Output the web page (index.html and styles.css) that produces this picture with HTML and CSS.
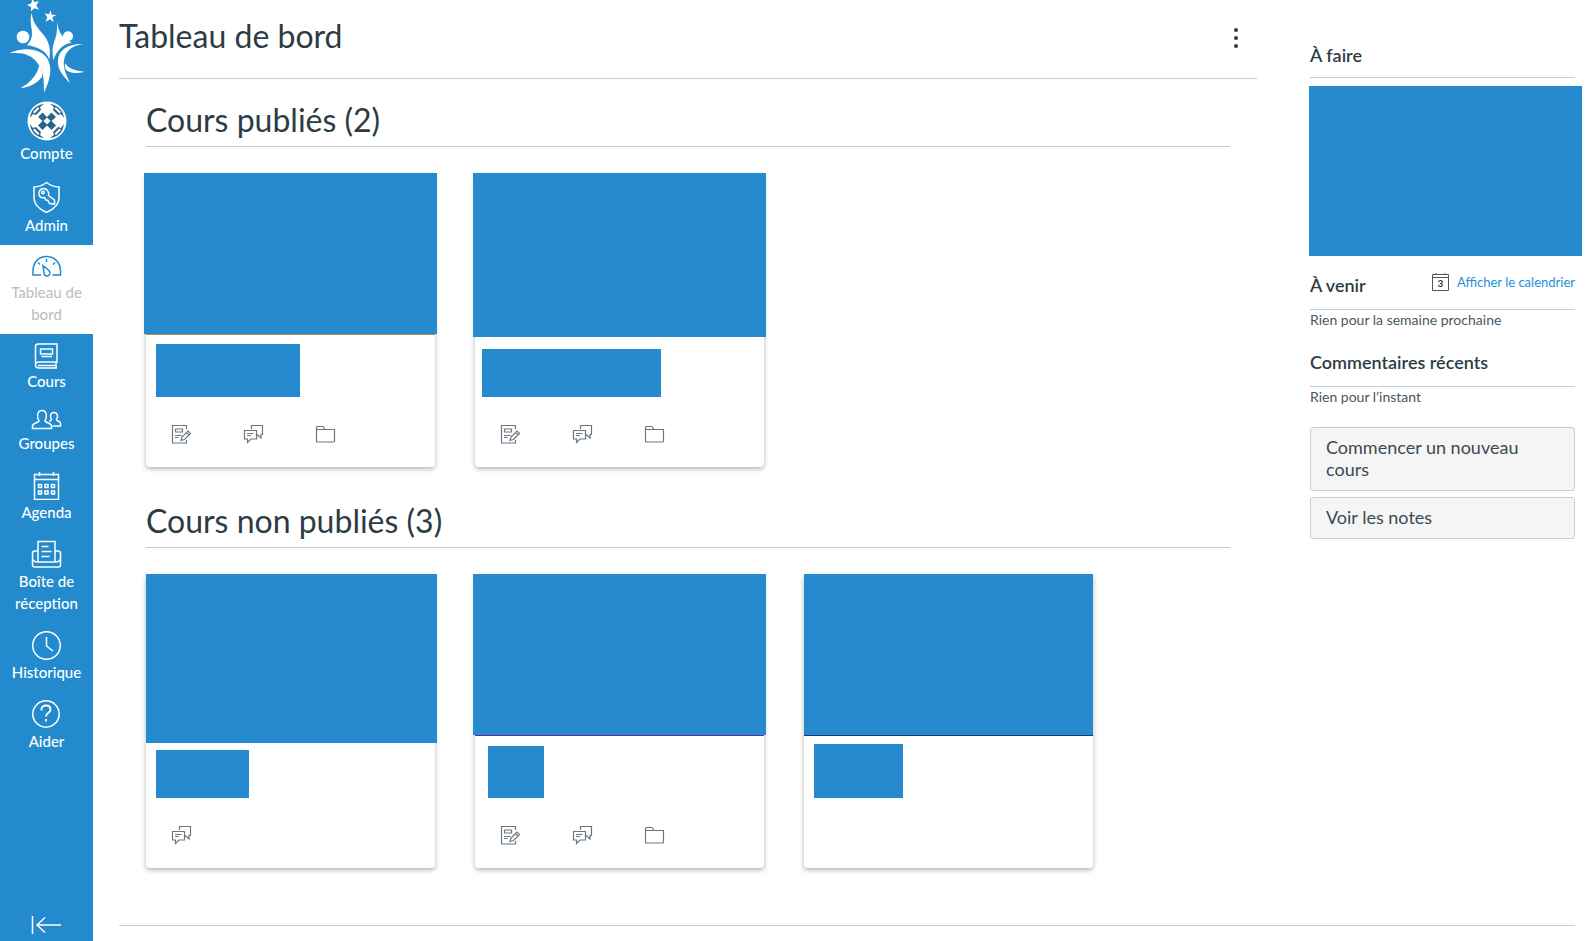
FILE: index.html
```
<!DOCTYPE html>
<html lang="fr">
	<head>
		<title>Tableau de bord</title>
		<meta charset="UTF-8">
		<link rel="stylesheet" href="styles.css">
	</head>
	<body>

		<!-- Shared card icons -->
		<svg class="symbols" width="0" height="0">
			<symbol id="icon-assignment" viewBox="0 0 21 20">
				<path d="M15.500 5V1.500H1.500v17.500h14v-3M4.500 5h7v3h-7zM4 11.500h6.500M4 13.500h3.500"/>
				<path d="M10 16.500l1-3.500 6-6 2.500 2.500-6 6zM15.500 8.500l2.500 2.500"/>
			</symbol>
			<symbol id="icon-discussion" viewBox="0 0 21 20">
				<path d="M8.500 5V1.500h11v9h-1.500V14l-4-3.500M1.500 6.500h12v8.500H8l-3.500 3.500V15h-3zM4 9.500h6.500M4 11.500h4"/>
			</symbol>
			<symbol id="icon-folder" viewBox="0 0 21 20">
				<path d="M1.500 5V3.500q0-1 1-1H8l2 3h9.500v11.500q0 1-1 1h-16q-1 0-1-1zM1.500 5.500H10"/>
			</symbol>
		</svg>

		<div class="layout">

			<nav class="global-nav">
				<a class="logo" href="#" aria-label="Accueil">
					<svg width="93" height="93" viewBox="0 0 279 279" fill="#fff">
						<path d="M97 -5l6 11 14-2-8 12 8 13-14-4-10 9v-13l-12-6 13-5z"/>
						<path d="M152 31l3 13 14 1-12 7 4 15-11-9-13 7 5-13-8-12 13 3z"/>
						<circle cx="69" cy="111" r="19"/>
						<circle cx="204" cy="109" r="15"/>
						<path d="M95 38c3 28 15 42 33 63 19 22 25 44 20 78-8-24-30-37-67-44 14-14 17-27 14-47-3-18-5-32 0-50z"/>
						<path d="M28 160c42-20 91-14 111 12 24 32 7 78-7 106 0-32 0-62-18-87-20-29-50-35-86-31z"/>
						<path d="M118 196c8 13 10 24 8 35-18 22-40 31-64 33 29-16 48-36 56-68z"/>
						<path d="M171 66c3 18 7 28 12 36 7 12 20 18 32 26-25 3-44 22-55 52-5-30-1-48 6-64 6-16 5-33 5-50z"/>
						<path d="M248 132c-40-1-65 15-72 37-10 33 12 59 34 80-12-27-23-49-17-73 5-23 22-38 55-44z"/>
						<path d="M195 190c13 18 30 22 58 25-18 6-38 5-52-3-6-6-8-12-6-22z"/>
					</svg>
				</a>
				<ul class="nav-list">
					<li><a class="nav-item" href="#">
						<svg width="40" height="40" viewBox="0 0 40 40">
							<circle cx="20" cy="20" r="19.500" fill="#fff"/>
							<path fill="#26678a" d="M15.500 11.500l4.500 4.500 4.500-4.500 4.500 4.500-4.500 4 4.500 4.500-4.500 4.500-4.500-4.500-4.500 4.500-4.500-4.500 4.500-4.500-4.500-4z"/>
							<path fill="#fff" d="M20 16.500l3.500 3.500-3.500 3.500-3.500-3.500z"/>
							<path fill="#26678a" d="M3 17C4 9 9 4 17 3l-4 3 1 3-5 5-3-1zM37 17C36 9 31 4 23 3l4 3-1 3 5 5 3-1zM3 23c1 8 6 13 14 14l-4-3 1-3-5-5-3 1zM37 23c-1 8-6 13-14 14l4-3-1-3 5-5 3 1z"/>
							<path fill="#fff" d="M6 11l5-5 1.500 1.500-5 5zM34 11l-5-5-1.500 1.500 5 5zM6 29l5 5 1.500-1.500-5-5zM34 29l-5 5-1.500-1.500 5-5z"/>
						</svg>
						Compte
					</a></li>
					<li><a class="nav-item" href="#">
						<svg width="31" height="32" viewBox="0 0 31 32">
							<path d="M15.500 1.500c4 3 8 4.500 12.500 4.500v11c0 7-6 11.500-12.500 14.500C9 28.500 3 24 3 17V6c4.500 0 8.500-1.500 12.500-4.500z"/>
							<path d="M17.500 14.500c1-4-2-7-5-7s-5.500 3-4.500 6.500c1 2.500 3.500 3 5.500 2.500l1.500 2.500 2 .5 1 2.500 2.500 1h3V19z"/>
							<circle cx="12" cy="11.500" r="1.300"/>
						</svg>
						Admin
					</a></li>
					<li><a class="nav-item active" href="#" aria-current="page">
						<svg width="31" height="27" viewBox="0 0 31 27">
							<path d="M10 22H2v-4C2 9 8 3.500 15.500 3.500S29.500 9 29.500 18v4h-8"/>
							<path d="M12 12.500l6 5c2 2.500.5 5.500-2 5.500-2 0-3-1.500-3-3.500zM15.500 6v3M7 9.500l2 2M24 9.500l-2 2"/>
						</svg>
						Tableau de bord
					</a></li>
					<li><a class="nav-item" href="#">
						<svg width="31" height="27" viewBox="0 0 31 27">
							<path d="M26 26H8c-2.500 0-3.500-1.500-3.500-3V4.500C4.500 3 5.500 2 7 2h19v18H8c-4.500 0-4.500 6 0 6M7 23.500h18M25 20v6"/>
							<path d="M9.500 7h12v5h-12zM10.500 14.500h10.500"/>
						</svg>
						Cours
					</a></li>
					<li><a class="nav-item" href="#">
						<svg width="31" height="22" viewBox="0 0 31 22">
							<path d="M1.500 19.500v-3c1-3 5-2 6.500-4.500C6 9 5.500 1.500 11 1.500S16 9 14 12c1.500 2.500 5.500 1.500 6.500 4.500v3z"/>
							<path d="M18 12.500c1 0 2-1 2.500-2-2-3-1-7 2.500-7s4.500 4 2.500 7c.5 2 4 1.500 4 4V17h-8"/>
						</svg>
						Groupes
					</a></li>
					<li><a class="nav-item" href="#">
						<svg width="31" height="29" viewBox="0 0 31 29">
							<path d="M3.500 3.500h24v25h-24zM3.500 8.500h24M8.500 1v4M22.500 1v4"/>
							<path d="M7.500 13.500h3v3h-3zM14 13.500h3v3h-3zM20.500 13.500h3v3h-3zM7.500 20h3v3h-3zM14 20h3v3h-3zM20.500 20h3v3h-3z"/>
						</svg>
						Agenda
					</a></li>
					<li><a class="nav-item" href="#">
						<svg width="31" height="29" viewBox="0 0 31 29">
							<path d="M7 11H4c-1.500 0-2.500 1-2.500 2.500V25c0 1 1 2 2 2h24c1 0 2-1 2-2V13.500C29.500 12 28.500 11 27 11h-3M1.500 18c0 2 2 4 4 4h20c2 0 4-2 4-4"/>
							<path d="M7 22V1.500h17V22M10.500 6.500h7M10.500 11.500h10M10.500 16.500h8"/>
						</svg>
						Boîte de réception
					</a></li>
					<li><a class="nav-item" href="#">
						<svg width="31" height="29" viewBox="0 0 31 29">
							<circle cx="15.500" cy="14.500" r="13.800"/>
							<path d="M15.500 6v9l6.500 5"/>
						</svg>
						Historique
					</a></li>
					<li><a class="nav-item" href="#">
						<svg width="31" height="29" viewBox="0 0 31 29">
							<circle cx="15" cy="14" r="13.200"/>
							<path d="M10.500 10.500V9c0-2 2-3.500 4.500-3.500s4.500 1.500 4.500 4c0 3.500-4.500 3-4.500 7M15 19v2.500" stroke-width="1.800"/>
						</svg>
						Aider
					</a></li>
				</ul>
				<button class="nav-toggle" aria-label="Réduire la navigation">
					<svg width="31" height="20" viewBox="0 0 31 20">
						<path d="M1.500 1v18M30 10H6M14 2.500L6 10l8 7.500"/>
					</svg>
				</button>
			</nav>

			<div class="wrapper">
				<div class="columns">

					<main class="dashboard">
						<header class="dashboard-header">
							<h1>Tableau de bord</h1>
							<button class="options" aria-label="Options du tableau de bord">
								<svg width="6" height="20" viewBox="0 0 6 20">
									<circle cx="3" cy="2" r="2"/><circle cx="3" cy="10" r="2"/><circle cx="3" cy="18" r="2"/>
								</svg>
							</button>
						</header>

						<section class="courses">
							<h2>Cours publiés (2)</h2>
							<div class="cards">
								<article class="card">
									<div class="hero math"><div class="cover"></div></div>
									<div class="card-body"><div class="name name-math"></div></div>
									<div class="actions">
										<a href="#" aria-label="Devoirs"><svg><use href="#icon-assignment"/></svg></a>
										<a href="#" aria-label="Discussions"><svg><use href="#icon-discussion"/></svg></a>
										<a href="#" aria-label="Fichiers"><svg><use href="#icon-folder"/></svg></a>
									</div>
								</article>
								<article class="card">
									<div class="hero"><div class="cover cover-tall"></div></div>
									<div class="card-body"><div class="name name-wide"></div></div>
									<div class="actions">
										<a href="#" aria-label="Devoirs"><svg><use href="#icon-assignment"/></svg></a>
										<a href="#" aria-label="Discussions"><svg><use href="#icon-discussion"/></svg></a>
										<a href="#" aria-label="Fichiers"><svg><use href="#icon-folder"/></svg></a>
									</div>
								</article>
							</div>
						</section>

						<section class="courses">
							<h2>Cours non publiés (3)</h2>
							<div class="cards">
								<article class="card">
									<div class="hero"><div class="cover cover-flush cover-full"></div></div>
									<div class="card-body"><div class="name name-medium"></div></div>
									<div class="actions">
										<a href="#" aria-label="Discussions"><svg><use href="#icon-discussion"/></svg></a>
									</div>
								</article>
								<article class="card">
									<div class="hero purple"><div class="cover"></div></div>
									<div class="card-body"><div class="name name-small"></div></div>
									<div class="actions">
										<a href="#" aria-label="Devoirs"><svg><use href="#icon-assignment"/></svg></a>
										<a href="#" aria-label="Discussions"><svg><use href="#icon-discussion"/></svg></a>
										<a href="#" aria-label="Fichiers"><svg><use href="#icon-folder"/></svg></a>
									</div>
								</article>
								<article class="card">
									<div class="hero navy"><div class="cover cover-inside"></div></div>
									<div class="card-body"><div class="name name-short"></div></div>
									<div class="actions"></div>
								</article>
							</div>
						</section>
					</main>

					<aside class="right-side">
						<h2 class="side-header todo-header">À faire</h2>
						<div class="todo-list"></div>

						<div class="side-header">
							<h2>À venir</h2>
							<a class="calendar-link" href="#">
								<svg width="17" height="18" viewBox="0 0 17 18">
									<path d="M.5 1.500h16v16H.5zM.5 4.500h16M4 0v2M13 0v2"/>
									<text x="8.500" y="14" text-anchor="middle">3</text>
								</svg>
								Afficher le calendrier
							</a>
						</div>
						<p>Rien pour la semaine prochaine</p>

						<h2 class="side-header">Commentaires récents</h2>
						<p>Rien pour l’instant</p>

						<div class="side-buttons">
							<button class="btn">Commencer un nouveau cours</button>
							<button class="btn">Voir les notes</button>
						</div>
					</aside>

				</div>
				<footer class="footer"></footer>
			</div>

		</div>
	</body>
</html>
```
FILE: styles.css
```
* {
	box-sizing: border-box;
}
body {
	margin: 0;
	background-color: #fff;
	color: #2d3b45;
	font-family: Lato, "Liberation Sans", sans-serif;
	font-size: 14px;
}
h1, h2, p, ul {
	margin: 0;
	padding: 0;
	font-weight: normal;
}
button {
	font-family: inherit;
	color: inherit;
	cursor: pointer;
}
a {
	color: inherit;
	text-decoration: none;
}
svg {
	display: block;
}
.symbols {
	position: absolute;
}
.layout {
	display: flex;
	min-height: 100vh;
}

/* Global navigation */
.global-nav {
	display: flex;
	flex-direction: column;
	flex: none;
	width: 93px;
	background-color: #238acd;
	color: #fff;
}
.nav-list {
	list-style: none;
}
.nav-item {
	display: block;
	padding: 8px 8px 9px;
	font-size: 15px;
	font-weight: 500;
	line-height: 22px;
	text-align: center;
}
.nav-item svg {
	margin: 0 auto 1px;
	fill: none;
	stroke: #fff;
	stroke-width: 1.5;
}
.nav-item circle[fill],
.nav-item path[fill] {
	stroke: none;
}
.nav-item.active {
	background-color: #fff;
	color: #bfbfbf;
}
.nav-item.active svg {
	stroke: #238acd;
}
.nav-toggle {
	margin-top: auto;
	padding: 0 0 6px;
	border: none;
	background: none;
}
.nav-toggle svg {
	margin: 0 auto;
	fill: none;
	stroke: #fff;
	stroke-width: 1.5;
}

/* Page */
.wrapper {
	display: flex;
	flex-direction: column;
	flex: 1;
	padding: 0 17px 0 26px;
}
.columns {
	display: flex;
	flex: 1;
	gap: 53px;
}
.footer {
	height: 16px;
	border-top: 1px solid #c7cdd1;
}
.dashboard {
	flex: 1;
}
.dashboard-header {
	display: flex;
	justify-content: space-between;
	align-items: flex-end;
	padding: 16px 18px 22px 0;
	border-bottom: 1px solid #c7cdd1;
}
.dashboard-header h1,
.courses h2 {
	font-size: 32px;
	line-height: 40px;
}
.options {
	padding: 0 0 8px;
	border: none;
	background: none;
}
.options svg {
	fill: #2d3b45;
}

/* Course cards */
.courses {
	padding: 21px 27px 13px;
}
.courses h2 {
	padding-bottom: 6px;
	border-bottom: 1px solid #c7cdd1;
}
.cards {
	display: flex;
	flex-wrap: wrap;
	gap: 40px;
	padding-top: 26px;
}
.card {
	width: 289px;
	border-radius: 4px;
	box-shadow: 0 2px 5px rgba(0,0,0,0.3);
}
.hero {
	height: 162px;
}
.hero.math {
	background-color: #b08a60;
}
.hero.purple {
	background-color: #6b2f8f;
}
.hero.navy {
	background-color: #1c3a6b;
}
.cover {
	height: 161px;
	margin: 0 -2px;
	background-color: #258bce;
}
.cover-tall {
	height: 164px;
}
.cover-full {
	height: 169px;
}
.cover-flush {
	margin-left: 0;
}
.cover-inside {
	margin: 0;
}
.card-body {
	display: flex;
	align-items: flex-end;
	height: 62px;
	padding: 0 10px;
}
.name {
	width: 144px;
	height: 53px;
	background-color: #258bce;
}
.name-wide {
	width: 179px;
	height: 48px;
	margin-left: -3px;
}
.name-medium {
	width: 93px;
	height: 48px;
}
.name-small {
	width: 56px;
	height: 52px;
	margin-left: 3px;
}
.name-short {
	width: 89px;
	height: 54px;
}
.actions {
	display: flex;
	gap: 51px;
	height: 70px;
	padding: 27px 25px;
}
.actions svg {
	width: 21px;
	height: 20px;
	fill: none;
	stroke: #6b7780;
	stroke-width: 1.2;
}

/* Right side */
.right-side {
	width: 265px;
	padding-top: 43px;
}
.side-header {
	display: flex;
	justify-content: space-between;
	padding-bottom: 12px;
	border-bottom: 1px solid #c7cdd1;
}
.todo-header {
	padding-bottom: 10px;
}
h2.side-header,
.side-header h2 {
	font-size: 18px;
	font-weight: 600;
	line-height: 24px;
}
.todo-list {
	height: 170px;
	margin: 8px -7px 17px -1px;
	background-color: #258bce;
}
.calendar-link {
	display: flex;
	gap: 8px;
	color: #2590d8;
	font-size: 13px;
	line-height: 19px;
}
.calendar-link svg {
	fill: none;
	stroke: #555;
}
.calendar-link text {
	fill: #333;
	stroke: none;
	font-size: 10px;
	font-weight: bold;
}
.right-side p {
	margin-bottom: 20px;
	line-height: 20px;
	color: #4a5760;
}
.side-buttons {
	display: flex;
	flex-direction: column;
	gap: 6px;
}
.btn {
	padding: 8px 16px 10px 15px;
	border: 1px solid #c7cdd1;
	border-radius: 3px;
	background-color: #f5f5f5;
	color: #3c4953;
	font-size: 18px;
	line-height: 22px;
	text-align: left;
}
```
